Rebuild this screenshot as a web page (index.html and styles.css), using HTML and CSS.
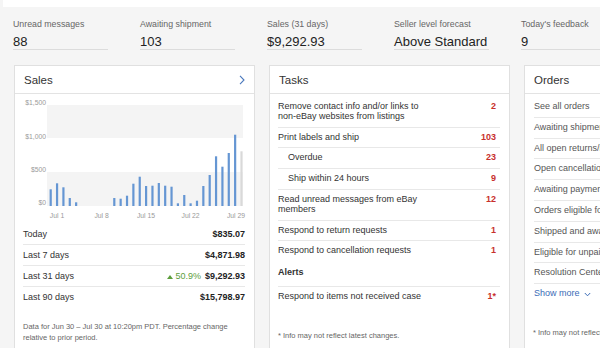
FILE: index.html
```html
<!DOCTYPE html>
<html lang="en">
<head>
<meta charset="UTF-8">
<title>Seller Hub Overview</title>
<link rel="stylesheet" href="styles.css">
</head>
<body>
<div class="topbar"></div>

<div class="stats">
    <div class="stat">
        <div class="stat-label">Unread messages</div>
        <div class="stat-value">88</div>
    </div>
    <div class="stat">
        <div class="stat-label">Awaiting shipment</div>
        <div class="stat-value">103</div>
    </div>
    <div class="stat">
        <div class="stat-label">Sales (31 days)</div>
        <div class="stat-value">$9,292.93</div>
    </div>
    <div class="stat">
        <div class="stat-label">Seller level forecast</div>
        <div class="stat-value">Above Standard</div>
    </div>
    <div class="stat">
        <div class="stat-label">Today's feedback</div>
        <div class="stat-value">9</div>
    </div>
</div>

<div class="cards">
    <!-- sales -->
    <section class="card">
        <div class="card-head">
            <h2>Sales</h2>
            <svg class="chevron" width="6" height="10" viewBox="0 0 6 10"><path d="M1 0.8 L5 5 L1 9.2" fill="none" stroke="#4a78bd" stroke-width="1.1"/></svg>
        </div>
        <svg class="chart" width="239" height="130" viewBox="0 0 239 130">
            <rect x="32" y="11" width="196" height="33" fill="#f4f4f4"/>
            <rect x="32" y="78" width="196" height="34" fill="#f4f4f4"/>
            <g class="axis">
                <text x="31" y="10.5" text-anchor="end">$1,500</text>
                <text x="31" y="44.5" text-anchor="end">$1,000</text>
                <text x="31" y="77.5" text-anchor="end">$500</text>
                <text x="31" y="110.5" text-anchor="end">$0</text>
                <text x="42" y="123.5" text-anchor="middle">Jul 1</text>
                <text x="86.6" y="123.5" text-anchor="middle">Jul 8</text>
                <text x="131" y="123.5" text-anchor="middle">Jul 15</text>
                <text x="175.6" y="123.5" text-anchor="middle">Jul 22</text>
                <text x="221" y="123.5" text-anchor="middle">Jul 29</text>
            </g>
            <g fill="#6596d3">
                <rect x="34.6" y="95.3" width="2.2" height="16.7"/>
                <rect x="40.96" y="89.3" width="2.2" height="22.7"/>
                <rect x="47.32" y="93.3" width="2.2" height="18.7"/>
                <rect x="53.68" y="104" width="2.2" height="8"/>
                <rect x="60.04" y="108.3" width="2.2" height="3.7"/>
                <rect x="98.2" y="104" width="2.2" height="8"/>
                <rect x="104.56" y="104.7" width="2.2" height="7.3"/>
                <rect x="110.92" y="101.7" width="2.2" height="10.3"/>
                <rect x="117.28" y="89.7" width="2.2" height="22.3"/>
                <rect x="123.64" y="82.7" width="2.2" height="29.3"/>
                <rect x="130" y="92" width="2.2" height="20"/>
                <rect x="136.36" y="91.7" width="2.2" height="20.3"/>
                <rect x="142.72" y="89" width="2.2" height="23"/>
                <rect x="149.08" y="91.7" width="2.2" height="20.3"/>
                <rect x="155.44" y="92.7" width="2.2" height="19.3"/>
                <rect x="161.8" y="109.3" width="2.2" height="2.7"/>
                <rect x="168.16" y="101" width="2.2" height="11"/>
                <rect x="174.52" y="109.3" width="2.2" height="2.7"/>
                <rect x="180.88" y="106.7" width="2.2" height="5.3"/>
                <rect x="187.24" y="92" width="2.2" height="20"/>
                <rect x="193.6" y="81" width="2.2" height="31"/>
                <rect x="199.96" y="62.3" width="2.2" height="49.7"/>
                <rect x="206.32" y="72.7" width="2.2" height="39.3"/>
                <rect x="212.68" y="59" width="2.2" height="53"/>
                <rect x="219.04" y="40.7" width="2.2" height="71.3"/>
            </g>
            <rect x="225.4" y="57.3" width="2.2" height="54.7" fill="#d9d9d9"/>
        </svg>
        <div class="summary">
            <div class="sum-row"><span>Today</span><b>$835.07</b></div>
            <div class="sum-row"><span>Last 7 days</span><b>$4,871.98</b></div>
            <div class="sum-row"><span>Last 31 days</span><span class="change"><i class="up"></i>50.9%</span><b>$9,292.93</b></div>
            <div class="sum-row"><span>Last 90 days</span><b>$15,798.97</b></div>
        </div>
        <p class="note sales-note">Data for Jun 30 – Jul 30 at 10:20pm PDT. Percentage change relative to prior period.</p>
    </section>

    <!-- tasks -->
    <section class="card">
        <div class="card-head"><h2>Tasks</h2></div>
        <div class="list">
            <div class="row two"><span>Remove contact info and/or links to<br>non-eBay websites from listings</span><span class="count">2</span></div>
            <div class="row"><span>Print labels and ship</span><span class="count">103</span></div>
            <div class="row sub"><span>Overdue</span><span class="count">23</span></div>
            <div class="row sub"><span>Ship within 24 hours</span><span class="count">9</span></div>
            <div class="row two"><span>Read unread messages from eBay<br>members</span><span class="count">12</span></div>
            <div class="row"><span>Respond to return requests</span><span class="count">1</span></div>
            <div class="row last"><span>Respond to cancellation requests</span><span class="count">1</span></div>
            <div class="alerts">Alerts</div>
            <div class="row last"><span>Respond to items not received case</span><span class="count">1*</span></div>
        </div>
        <p class="note tasks-note">* Info may not reflect latest changes.</p>
    </section>

    <!-- orders -->
    <section class="card">
        <div class="card-head"><h2>Orders</h2></div>
        <div class="list orders">
            <div class="row"><span>See all orders</span></div>
            <div class="row"><span>Awaiting shipment</span></div>
            <div class="row"><span>All open returns/replacements</span></div>
            <div class="row"><span>Open cancellations</span></div>
            <div class="row"><span>Awaiting payment</span></div>
            <div class="row"><span>Orders eligible for feedback</span></div>
            <div class="row"><span>Shipped and awaiting feedback</span></div>
            <div class="row"><span>Eligible for unpaid item case</span></div>
            <div class="row"><span>Resolution Center</span></div>
            <div class="row last more">Show more <svg width="7" height="5" viewBox="0 0 7 5"><path d="M0.8 1 L3.5 3.8 L6.2 1" fill="none" stroke="#3b6cb7" stroke-width="1"/></svg></div>
        </div>
        <p class="note orders-note">* Info may not reflect latest changes.</p>
    </section>
</div>
</body>
</html>
```

FILE: styles.css
```css
body {
    margin: 0;
    background-color: #f5f5f5;
    font-family: "Liberation Sans", Arial, sans-serif;
    color: #333;
    overflow: hidden;
}
.topbar {
    height: 7px;
    margin-left: 3px;
    background: #fff;
}

/* 顶部统计 */
.stats {
    display: flex;
    gap: 32px;
    padding: 12px 0 0 13px;
}
.stat {
    width: 95px;
    flex: none;
    border-bottom: 1px solid #dcdcdc;
}
.stat-label {
    font-size: 8.8px;
    line-height: 11px;
    color: #666;
}
.stat-value {
    margin-top: 4px;
    font-size: 13px;
    line-height: 15px;
    color: #222;
}

/* 卡片 */
.cards {
    display: flex;
    gap: 14px;
    padding: 15px 0 0 14px;
}
.card {
    width: 239px;
    height: 300px;
    flex: none;
    background: #fff;
    border: 1px solid #e0e0e0;
}
.card-head {
    display: flex;
    justify-content: space-between;
    align-items: center;
    height: 27px;
    padding: 0 9px;
    border-bottom: 1px solid #e3e3e3;
}
.card-head h2 {
    margin: 0;
    font-size: 11.5px;
    font-weight: normal;
    color: #333;
}
.chart {
    display: block;
}
.axis text {
    font-size: 6.8px;
    fill: #9a9a9a;
}

.summary {
    margin: 0 9px 0 8px;
}
.sum-row {
    display: flex;
    align-items: center;
    height: 20px;
    font-size: 9px;
    border-bottom: 1px solid #e8e8e8;
}
.sum-row:last-child {
    border-bottom: none;
}
.sum-row span:first-child {
    flex: 1;
}
.sum-row b {
    color: #222;
}
.change {
    margin-right: 4px;
    color: #5c9e3c;
}
.up {
    display: inline-block;
    width: 0;
    height: 0;
    margin-right: 2px;
    border-left: 3px solid transparent;
    border-right: 3px solid transparent;
    border-bottom: 4px solid #5c9e3c;
}

.note {
    margin: 0 9px 0 8px;
    font-size: 7.5px;
    line-height: 11px;
    color: #666;
}
.sales-note {
    margin-top: 14px;
}
.tasks-note, .orders-note {
    margin-top: 23px;
}

/* 任务和订单列表 */
.list {
    margin: 3px 9px 0 8px;
}
.row {
    display: flex;
    justify-content: space-between;
    padding: 5px 0;
    font-size: 9px;
    line-height: 9.8px;
    border-bottom: 1px solid #e8e8e8;
}
.row.last {
    border-bottom: none;
}
.row.sub {
    padding-left: 10px;
}
.count {
    padding-right: 4px;
    color: #c8302c;
    font-weight: bold;
}
.alerts {
    padding: 6px 0 9px;
    font-size: 9px;
    line-height: 10px;
    font-weight: bold;
    border-bottom: 1px solid #e8e8e8;
}
.orders {
    margin-left: 9px;
}
.orders .row {
    color: #555;
    white-space: nowrap;
}
.more {
    justify-content: flex-start;
    align-items: center;
    gap: 4px;
    color: #3b6cb7 !important;
}
```
